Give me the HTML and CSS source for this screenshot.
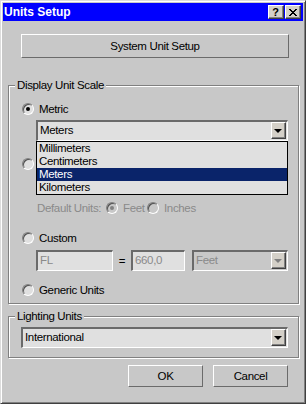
FILE: index.html
```html
<!DOCTYPE html>
<html lang="en">
<head>
    <meta charset="UTF-8">
    <title>Units Setup</title>
    <link rel="stylesheet" href="styles.css">
</head>
<body>

    <div class="window">
        <!-- Title Bar -->
        <div class="titlebar">
            <span class="title">Units Setup</span>
            <div class="title-btns">
                <span class="tbtn help">?</span>
                <span class="tbtn close">
                    <svg width="8" height="7" viewBox="0 0 8 7">
                        <path d="M0 0h2v1h1v1h2v-1h1v-1h2v1h-1v1h-1v1h-1v1h1v1h1v1h1v1h-2v-1h-1v-1h-2v1h-1v1h-2v-1h1v-1h1v-1h1v-1h-1v-1h-1v-1h-1z" fill="#000"/>
                    </svg>
                </span>
            </div>
        </div>

        <div class="content">
            <div class="btn wide-btn">System Unit Setup</div>

            <!-- Display Unit Scale -->
            <div class="group display-group">
                <span class="group-title">Display Unit Scale</span>

                <div class="row metric-row">
                    <span class="radio checked"></span>
                    <span class="label">Metric</span>
                </div>

                <div class="combo metric-combo">
                    <span class="combo-text">Meters</span>
                    <span class="arrow-btn"><span class="arrow"></span></span>
                    <ul class="droplist">
                        <li>Millimeters</li>
                        <li>Centimeters</li>
                        <li class="selected">Meters</li>
                        <li>Kilometers</li>
                    </ul>
                </div>

                <!-- US Standard: label is covered by the open list -->
                <div class="row us-row">
                    <span class="radio"></span>
                </div>

                <div class="row default-row disabled">
                    <span class="du-label">Default Units:</span>
                    <span class="radio checked"></span>
                    <span class="label feet">Feet</span>
                    <span class="radio"></span>
                    <span class="label">Inches</span>
                </div>

                <div class="row custom-row">
                    <span class="radio"></span>
                    <span class="label">Custom</span>
                </div>

                <div class="custom-fields">
                    <span class="field fl-field">FL</span>
                    <span class="equals">=</span>
                    <span class="field num-field">660,0</span>
                    <div class="combo feet-combo disabled">
                        <span class="combo-text">Feet</span>
                        <span class="arrow-btn"><span class="arrow"></span></span>
                    </div>
                </div>

                <div class="row generic-row">
                    <span class="radio"></span>
                    <span class="label">Generic Units</span>
                </div>
            </div>

            <!-- Lighting Units -->
            <div class="group lighting-group">
                <span class="group-title">Lighting Units</span>
                <div class="combo light-combo">
                    <span class="combo-text">International</span>
                    <span class="arrow-btn"><span class="arrow"></span></span>
                </div>
            </div>

            <div class="actions">
                <div class="btn action-btn">OK</div>
                <div class="btn action-btn">Cancel</div>
            </div>
        </div>
    </div>

</body>
</html>
```

FILE: styles.css
```css
* {
    margin: 0;
    padding: 0;
    box-sizing: border-box;
}

body {
    background-color: #c8c8c8;
    color: #000;
    font-family: "Liberation Sans", Arial, sans-serif;
    font-size: 11.5px;
    letter-spacing: -0.35px;
    line-height: 16px;
    white-space: nowrap;
}

/* Window frame */
.window {
    width: 306px;
    height: 404px;
    background-color: #c8c8c8;
    border: 1px solid;
    border-color: #dcdcdc #404040 #404040 #dcdcdc;
    box-shadow: inset 1px 1px #fff, inset -1px -1px #808080;
    padding: 2px;
}

/* Title Bar */
.titlebar {
    height: 18px;
    background-color: #0000ff;
    display: flex;
    align-items: center;
    justify-content: space-between;
    padding: 0 2px 0 1px;
}

.title {
    color: #fff;
    font-weight: bold;
    font-size: 12px;
    letter-spacing: 0;
}

.title-btns {
    display: flex;
    gap: 1px;
}

.tbtn {
    width: 16px;
    height: 14px;
    background-color: #d4d0c8;
    border: 1px solid;
    border-color: #fff #404040 #404040 #fff;
    box-shadow: inset -1px -1px #808080;
    display: flex;
    align-items: center;
    justify-content: center;
}

.tbtn.help {
    font-weight: bold;
    font-size: 11px;
    letter-spacing: 0;
    line-height: 12px;
    padding-right: 1px;
}

.tbtn svg {
    display: block;
    margin-right: 1px;
}

/* Buttons */
.btn {
    background-color: #c8c8c8;
    border: 1px solid;
    border-color: #fff #6b6b6b #6b6b6b #fff;
    display: flex;
    align-items: center;
    justify-content: center;
}

.wide-btn {
    margin: 13px 0 0 18px;
    width: 268px;
    height: 24px;
}

.actions {
    margin-top: 7px;
    display: flex;
    justify-content: flex-end;
    gap: 10px;
    padding-right: 15px;
}

.action-btn {
    width: 75px;
    height: 22px;
}

/* Group boxes */
.group {
    width: 291px;
    margin-left: 5px;
    border: 1px solid #808080;
    box-shadow: 1px 1px #fff, inset 1px 1px #fff;
    display: flex;
    flex-direction: column;
    align-items: flex-start;
}

.group-title {
    display: block;
    margin: -7px 0 0 6px;
    padding: 0 2px;
    line-height: 13px;
    background-color: #c8c8c8;
}

.display-group {
    margin-top: 27px;
    padding-bottom: 5px;
}

.lighting-group {
    margin-top: 12px;
    padding-bottom: 9px;
}

/* Rows and radios */
.row {
    display: flex;
    align-items: center;
    height: 16px;
    padding-left: 13px;
}

.metric-row { margin-top: 9px; }
.us-row { margin-top: 15px; }
.default-row { margin-top: 28px; padding-left: 28px; }
.custom-row { margin-top: 14px; }
.generic-row { margin-top: 11px; }

.label {
    margin-left: 5px;
}

.radio {
    flex: none;
    width: 12px;
    height: 12px;
    border-radius: 50%;
    background-color: #e0e0e0;
    border: 1px solid;
    border-color: #808080 #fff #fff #808080;
    box-shadow: inset 1px 1px #505050;
    display: flex;
    align-items: center;
    justify-content: center;
}

.radio.checked::after {
    content: "";
    width: 4px;
    height: 4px;
    border-radius: 50%;
    background-color: #000;
}

.disabled {
    color: #8a8a8a;
}

.disabled .radio {
    background-color: #c8c8c8;
}

.disabled .radio.checked::after {
    background-color: #808080;
}

.du-label {
    width: 69px;
}

.feet {
    width: 24px;
}

/* Combo boxes */
.combo {
    position: relative;
    display: flex;
    height: 21px;
    border-style: solid;
    border-width: 2px 1px 1px 2px;
    border-color: #6a6a6a #fff #fff #6a6a6a;
    padding: 0 1px 1px 0;
    background-color: #e0e0e0;
}

.combo-text {
    flex: 1;
    padding-left: 2px;
    line-height: 17px;
}

.arrow-btn {
    width: 15px;
    background-color: #d4d0c8;
    border: 1px solid;
    border-color: #fff #404040 #404040 #fff;
    box-shadow: inset -1px -1px #808080;
    display: flex;
    align-items: center;
    justify-content: center;
}

.arrow {
    width: 0;
    height: 0;
    border-left: 4px solid transparent;
    border-right: 4px solid transparent;
    border-top: 4px solid #000;
    margin-right: 1px;
}

.metric-combo {
    margin: 3px 0 0 27px;
    width: 252px;
}

.light-combo {
    margin: 4px 0 0 12px;
    width: 267px;
}

.feet-combo {
    width: 96px;
    margin-left: 7px;
    background-color: #c8c8c8;
}

.feet-combo .arrow {
    border-top-color: #808080;
}

/* Dropdown list */
.droplist {
    position: absolute;
    left: -2px;
    top: calc(100% + 1px);
    width: 252px;
    list-style: none;
    background-color: #e0e0e0;
    border: 1px solid #000;
    z-index: 2;
}

.droplist li {
    height: 13px;
    line-height: 13px;
    padding-left: 2px;
}

.droplist .selected {
    background-color: #0a246a;
    color: #fff;
}

/* Custom fields */
.custom-fields {
    display: flex;
    align-items: center;
    margin: 4px 0 0 27px;
}

.field {
    height: 21px;
    border-style: solid;
    border-width: 2px 1px 1px 2px;
    border-color: #6a6a6a #fff #fff #6a6a6a;
    background-color: #e0e0e0;
    color: #8a8a8a;
    padding-left: 2px;
    line-height: 17px;
}

.fl-field { width: 77px; }
.num-field { width: 54px; }

.equals {
    width: 18px;
    text-align: center;
}
```
